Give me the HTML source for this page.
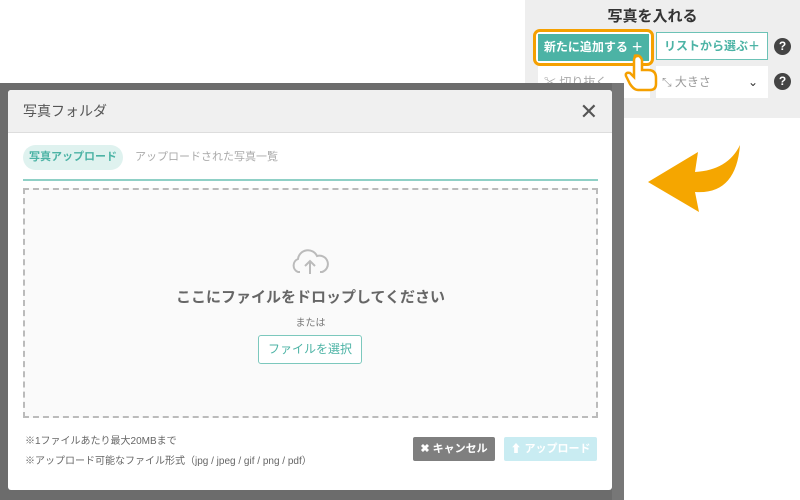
<!DOCTYPE html>
<html><head><meta charset="utf-8"><style>
*{margin:0;padding:0;box-sizing:border-box}
body{width:800px;height:500px;background:#fff;position:relative;overflow:hidden;font-family:"Liberation Sans","Noto Sans CJK JP",sans-serif}
.a{position:absolute}
</style></head><body>
<div class="a" style="left:525px;top:0;width:275px;height:118px;background:#eeeeee"></div>
<div class="a" style="left:560px;top:5px;width:185px;text-align:center;font-size:15px;font-weight:bold;color:#333">写真を入れる</div>
<div class="a" style="left:533px;top:29px;width:121px;height:37px;border:3px solid #f5a000;border-radius:7px;background:#fff"></div>
<div class="a" style="left:538px;top:34px;width:111px;height:27px;background:#4cb3a5;color:#fff;font-size:12px;font-weight:bold;line-height:27px;text-align:center">新たに追加する ＋</div>
<div class="a" style="left:656px;top:32px;width:112px;height:28px;border:1px solid #6cc2b6;background:#fff;color:#4cb3a5;font-size:12px;font-weight:bold;line-height:26px;text-align:center">リストから選ぶ＋</div>
<div class="a" style="left:774px;top:38px;width:17px;height:17px;border-radius:50%;background:#444;color:#fff;font-size:12px;font-weight:bold;text-align:center;line-height:17px">?</div>
<div class="a" style="left:774px;top:73px;width:17px;height:17px;border-radius:50%;background:#444;color:#fff;font-size:12px;font-weight:bold;text-align:center;line-height:17px">?</div>
<div class="a" style="left:538px;top:66px;width:112px;height:32px;background:#fff;color:#aaa;font-size:12px;line-height:32px;padding-left:6px">✂ 切り抜く</div>
<div class="a" style="left:656px;top:66px;width:112px;height:32px;background:#fff;color:#999;font-size:12px;line-height:32px;padding-left:6px">⤡ 大きさ<span style="position:absolute;right:10px;color:#333">⌄</span></div>
<svg class="a" style="left:622px;top:52px" width="36" height="40"><path d="M12 4 q6 -2 8 4 v10 h6 q8 0 8 8 v6 q0 6 -6 6 h-12 q-4 0 -8 -6 l-4 -8 q-1 -4 4 -3 l4 4 v-17 q0 -4 4 -4z" fill="#fff" stroke="#f5a000" stroke-width="2.5"/></svg>
<div class="a" style="left:0;top:83px;width:624px;height:417px;background:#6c6c6c"></div>
<div class="a" style="left:612px;top:83px;width:12px;height:417px;background:#777"></div>
<div class="a" style="left:8px;top:90px;width:604px;height:400px;background:#fff;border-radius:3px;overflow:hidden">
 <div class="a" style="left:0;top:0;width:604px;height:43px;background:#f0f0f0;border-bottom:1px solid #ddd;font-size:14px;color:#555;line-height:43px;padding-left:15px">写真フォルダ<span style="position:absolute;right:14px;font-size:22px;color:#555">✕</span></div>
 <div class="a" style="left:15px;top:55px;width:100px;height:25px;border-radius:13px;background:#dff2ef;color:#4cb3a5;font-size:11px;font-weight:bold;line-height:25px;text-align:center">写真アップロード</div>
 <div class="a" style="left:127px;top:55px;font-size:11px;color:#aaa;line-height:25px">アップロードされた写真一覧</div>
 <div class="a" style="left:15px;top:89px;width:575px;height:2px;background:#8fd0c6"></div>
 <div class="a" style="left:15px;top:98px;width:575px;height:230px;border:2px dashed #bbb;background:#fafafa"></div>
 <svg class="a" style="left:282px;top:158px" width="40" height="30"><path d="M10 24 h-2 a7 7 0 0 1 0 -13 a10 10 0 0 1 19 -3 a8 8 0 0 1 5 16 h-2" fill="none" stroke="#bbb" stroke-width="2"/><path d="M20 26 v-12 M15 18 l5 -5 l5 5" fill="none" stroke="#bbb" stroke-width="2"/></svg>
 <div class="a" style="left:15px;top:196px;width:575px;text-align:center;font-size:15px;font-weight:bold;color:#666">ここにファイルをドロップしてください</div>
 <div class="a" style="left:15px;top:224px;width:575px;text-align:center;font-size:10px;color:#777">または</div>
 <div class="a" style="left:250px;top:245px;width:104px;height:29px;border:1.5px solid #7cc8bd;border-radius:3px;background:#fff;color:#4cb3a5;font-size:12px;line-height:26px;text-align:center">ファイルを選択</div>
 <div class="a" style="left:17px;top:342px;font-size:10px;color:#666;line-height:20px">※1ファイルあたり最大20MBまで<br>※アップロード可能なファイル形式（jpg / jpeg / gif / png / pdf）</div>
 <div class="a" style="left:405px;top:347px;width:82px;height:24px;background:#7f7f7f;border-radius:2px;color:#fff;font-size:11px;font-weight:bold;line-height:24px;text-align:center">✖ キャンセル</div>
 <div class="a" style="left:496px;top:347px;width:93px;height:24px;background:#c9ecf2;border-radius:2px;color:#fff;font-size:11px;font-weight:bold;line-height:24px;text-align:center">⬆ アップロード</div>
</div>
<svg class="a" style="left:640px;top:140px" width="110" height="80"><path d="M8 42 L58 12 L55 32 Q88 30 100 5 Q96 55 55 52 L59 72 Z" fill="#f5a600"/></svg>
</body></html>
